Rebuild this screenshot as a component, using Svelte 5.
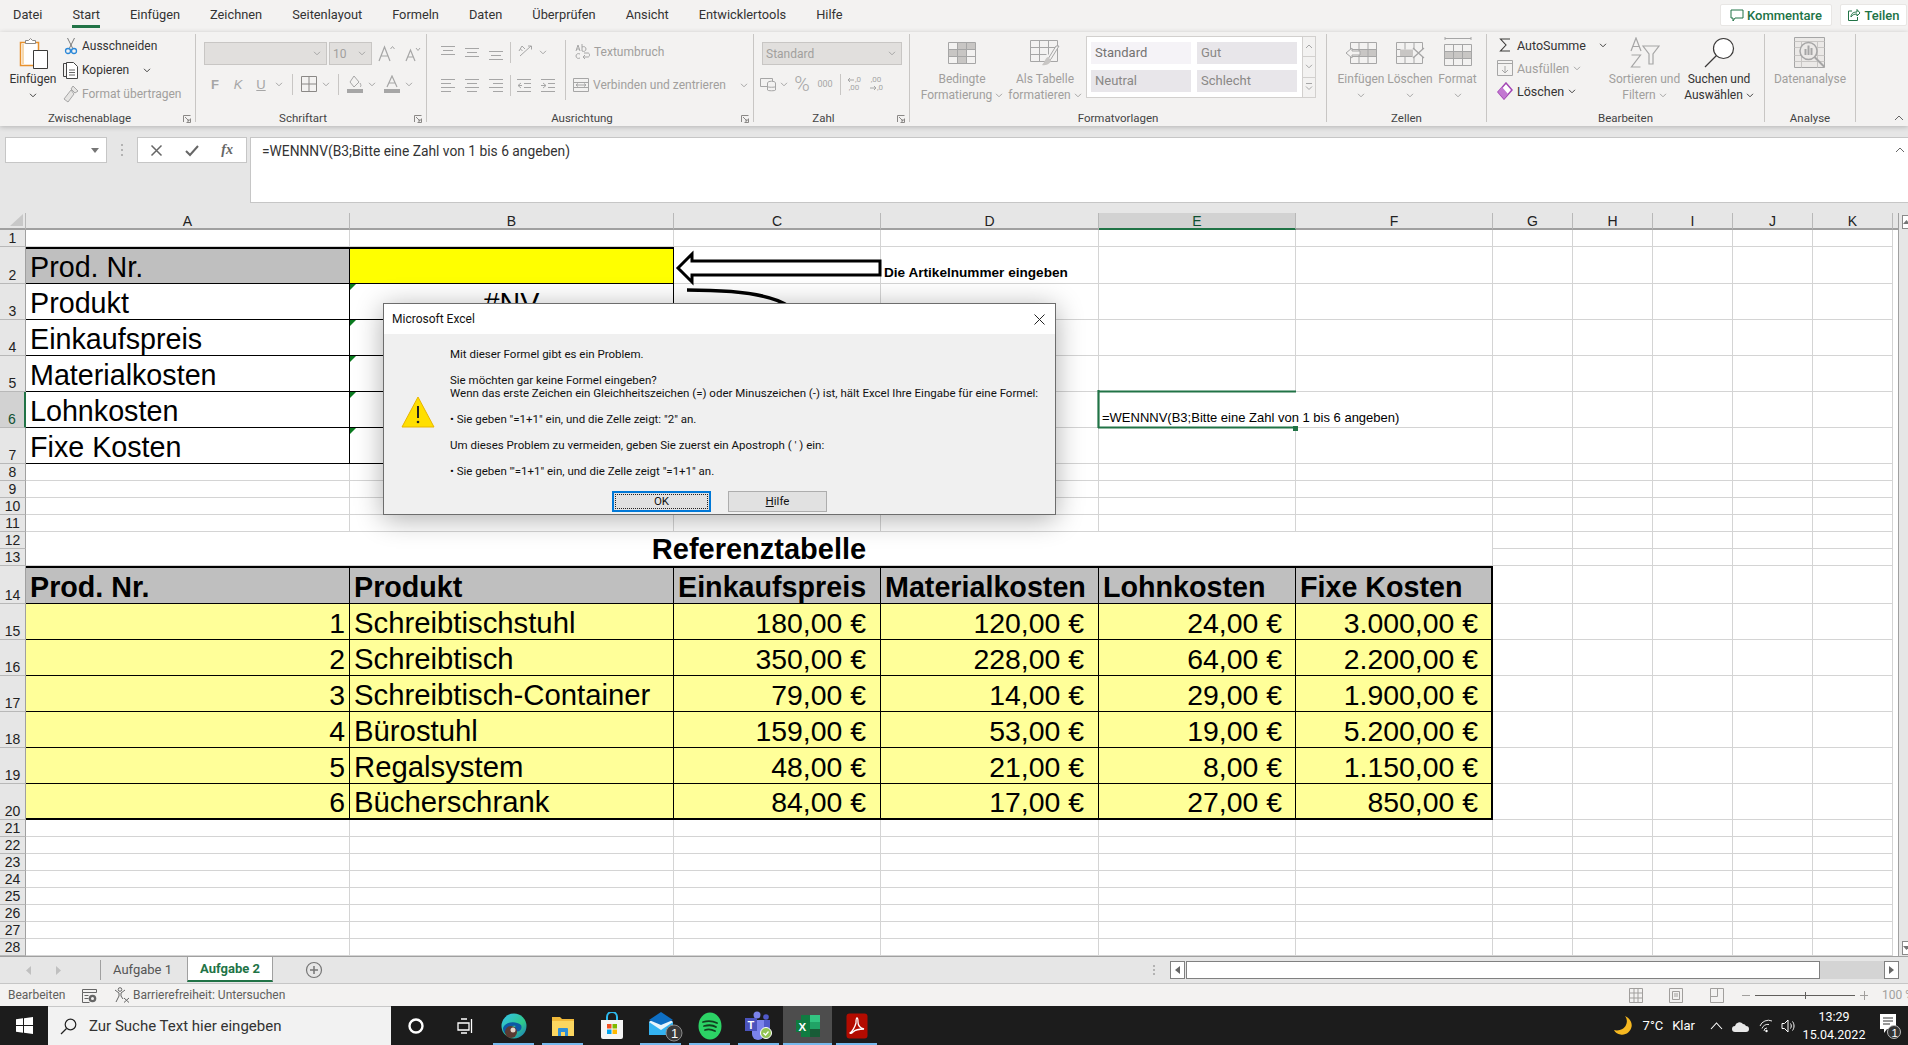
<script lang="ts">
  const cols = ['A', 'B', 'C', 'D', 'E', 'F', 'G', 'H', 'I', 'J', 'K']
  const rowNums = Array.from({ length: 28 }, (_, i) => i + 1)
  const tabs = ['Datei', 'Start', 'Einfügen', 'Zeichnen', 'Seitenlayout', 'Formeln', 'Daten', 'Überprüfen', 'Ansicht', 'Entwicklertools', 'Hilfe']

  const inputLabels: Record<number, string> = {
    2: 'Prod. Nr.',
    3: 'Produkt',
    4: 'Einkaufspreis',
    5: 'Materialkosten',
    6: 'Lohnkosten',
    7: 'Fixe Kosten',
  }

  const refTable = [
    ['Prod. Nr.', 'Produkt', 'Einkaufspreis', 'Materialkosten', 'Lohnkosten', 'Fixe Kosten'],
    ['1', 'Schreibtischstuhl', '180,00 €', '120,00 €', '24,00 €', '3.000,00 €'],
    ['2', 'Schreibtisch', '350,00 €', '228,00 €', '64,00 €', '2.200,00 €'],
    ['3', 'Schreibtisch-Container', '79,00 €', '14,00 €', '29,00 €', '1.900,00 €'],
    ['4', 'Bürostuhl', '159,00 €', '53,00 €', '19,00 €', '5.200,00 €'],
    ['5', 'Regalsystem', '48,00 €', '21,00 €', '8,00 €', '1.150,00 €'],
    ['6', 'Bücherschrank', '84,00 €', '17,00 €', '27,00 €', '850,00 €'],
  ]

  const formula = '=WENNNV(B3;Bitte eine Zahl von 1 bis 6 angeben)'

  function cellText(r: number, c: number): string {
    if (r >= 14 && r <= 20 && c <= 5) return refTable[r - 14][c]
    if (c === 0 && inputLabels[r]) return inputLabels[r]
    if (r === 3 && c === 1) return '#NV'
    if (r === 2 && c === 3) return 'Die Artikelnummer eingeben'
    if (r === 6 && c === 4) return formula
    return ''
  }

  function cellClass(r: number, c: number): string {
    const out: string[] = []
    if (r >= 2 && r <= 7 && c <= 1) {
      out.push('ink', 'lg')
      if (r === 2) out.push('top-thick', c === 0 ? 'grey' : 'yellow')
      if (r > 2 && c === 1) out.push('tri')
      if (r === 3 && c === 1) out.push('center')
    }
    if (r >= 14 && r <= 20 && c <= 5) {
      out.push('ink', 'lg')
      if (r === 14) out.push('top-thick', 'grey', 'bold')
      else out.push('pale')
      if (r === 20) out.push('bottom-thick')
      if (c === 5) out.push('right-thick')
      if (r > 14 && c !== 1) out.push('num', 'num-' + c)
      if (r > 14 && c === 1) out.push('prod')
    }
    if (r === 2 && c === 3) out.push('note')
    if (r === 6 && c === 4) out.push('formula')
    return out.join(' ')
  }
</script>

{#snippet chev(dark = false)}
  <svg class="chev" width="8" height="5" viewBox="0 0 8 5"><path d="M1 .8l3 3 3-3" fill="none" stroke={dark ? '#444' : '#a6a6a6'} stroke-width="1" /></svg>
{/snippet}

{#snippet launcher()}
  <svg class="launcher" width="8" height="8" viewBox="0 0 8 8"><path d="M.5 7V.5H7.500M7.500 3.500V7.500H3.500M2 2l4 4M6 4v2H4" fill="none" stroke="#8a8886" stroke-width="1" /></svg>
{/snippet}

<div class="page">
  <header class="tabbar">
    <nav class="tabs">
      {#each tabs as tab}
        <span class="tab" class:active={tab === 'Start'}>{tab}</span>
      {/each}
    </nav>
    <div class="share">
      <span class="share-btn comments">
        <svg width="14" height="13" viewBox="0 0 14 13"><path d="M1 1h12v8H5l-2 3V9H1z" fill="none" stroke="#217346" /></svg>
        Kommentare
      </span>
      <span class="share-btn teilen">
        <svg width="14" height="14" viewBox="0 0 14 14"><path d="M5 3H1.500v9.500h9V9M4 9c0-4 3-5 6-5V1.500L13 5l-3 3V6C7 6 5 7 4 9z" fill="none" stroke="#217346" /></svg>
        Teilen
      </span>
    </div>
  </header>

  <section class="ribbon">
    <div class="group g-clip">
      <div class="body clip-body">
        <div class="big w60">
          <div class="big-icon">
            <svg width="30" height="32" viewBox="0 0 30 32">
              <path d="M2.500 5.500h18v23h-18z" fill="#fff" stroke="#e8912c" stroke-width="1.500" />
              <path d="M4 27h2V7H4z" fill="#f6d9ae" />
              <path d="M7.500 6.500v-3h3l2-2 2 2h3v3z" fill="#fff" stroke="#8a8886" />
              <path d="M15.500 13.500h14v18h-14z" fill="#fff" stroke="#3b3a39" />
            </svg>
          </div>
          <span class="lbl dark">Einfügen</span>
          {@render chev(true)}
        </div>
        <div class="clip-list">
          <div class="line">
            <svg class="clip-ico" width="16" height="18" viewBox="0 0 16 18"><path d="M4.500 1l5 10M11.500 1l-5 10" fill="none" stroke="#7a7a7a" /><circle cx="5" cy="14" r="2.500" fill="none" stroke="#2b88d8" stroke-width="1.300" /><circle cx="11" cy="14" r="2.500" fill="none" stroke="#2b88d8" stroke-width="1.300" /></svg>
            <span class="dark">Ausschneiden</span>
          </div>
          <div class="line">
            <svg class="clip-ico" width="16" height="18" viewBox="0 0 16 18"><path d="M3.500 15.500h-3V2.500h3" fill="none" stroke="#444" /><path d="M3.500 1.500h7l4 4v12h-11z" fill="#fff" stroke="#444" /><path d="M6 9h6M6 11.500h6M6 14h6" stroke="#666" /></svg>
            <span class="dark">Kopieren</span>
            <span class="pad14">{@render chev(true)}</span>
          </div>
          <div class="line">
            <svg class="clip-ico" width="16" height="18" viewBox="0 0 16 18"><path d="M10 1l5 5-3 2-4-4zM8 5l3 4-6 8-4-3z" fill="#e6e5e3" stroke="#a6a6a6" /></svg>
            <span class="off">Format übertragen</span>
          </div>
        </div>
      </div>
      <div class="group-label shifted">Zwischenablage</div>
      {@render launcher()}
    </div>

    <div class="group g-font">
      <div class="body font-body">
        <div class="row1">
          <div class="combo c-font">{@render chev()}</div>
          <div class="combo c-size"><span>10</span>{@render chev()}</div>
          <svg class="afont" width="18" height="18" viewBox="0 0 18 18"><path d="M1 16L6.500 2 12 16M3 11h7" fill="none" stroke="#a6a6a6" stroke-width="1.200" /><path d="M12.500 4L14.500 1.500 16.500 4" fill="none" stroke="#a6a6a6" /></svg>
          <svg class="afont2" width="16" height="16" viewBox="0 0 16 16"><path d="M1 15L5.500 4 10 15M2.500 11h6" fill="none" stroke="#a6a6a6" stroke-width="1.200" /><path d="M11 2l2 2.500L15 2" fill="none" stroke="#a6a6a6" /></svg>
        </div>
        <div class="row2">
          <span class="t w22 letter b">F</span>
          <span class="t w24 letter i">K</span>
          <span class="t w22 letter u">U</span>
          <span class="t w14">{@render chev()}</span>
          <span class="t w12"><i class="sep"></i></span>
          <span class="t w22"><svg width="16" height="16" viewBox="0 0 16 16"><path d="M.5.500h15v15H.5zM8 .5v15M.5 8h15" fill="none" stroke="#8a8886" /></svg></span>
          <span class="t w12">{@render chev()}</span>
          <span class="t w12"><i class="sep"></i></span>
          <span class="t w22"><svg width="16" height="18" viewBox="0 0 16 18"><path d="M7 1l5 6-5 5-4-5z" fill="none" stroke="#a6a6a6" /><path d="M13 8c1 2 1.500 3 0 4" fill="none" stroke="#a6a6a6" /><path d="M0 14h16v4H0z" fill="#a6a6a6" /></svg></span>
          <span class="t w12">{@render chev()}</span>
          <span class="t w4"></span>
          <span class="t w20"><svg width="16" height="18" viewBox="0 0 16 18"><path d="M3 12L8 1l5 11M5 8h6" fill="none" stroke="#a6a6a6" stroke-width="1.200" /><path d="M0 14h16v4H0z" fill="#a6a6a6" /></svg></span>
          <span class="t w14">{@render chev()}</span>
        </div>
      </div>
      <div class="group-label shifted">Schriftart</div>
      {@render launcher()}
    </div>

    <div class="group g-align">
      <div class="body align-body">
        <div class="align-left">
          <div class="row1b">
            <span class="t w24"><svg width="16" height="16" viewBox="0 0 16 16"><path d="M1 2.500h14M3 6.500h10M1 10.500h14" stroke="#a6a6a6" /></svg></span>
            <span class="t w24"><svg width="16" height="16" viewBox="0 0 16 16"><path d="M1 4.500h14M3 8.500h10M1 12.500h14" stroke="#a6a6a6" /></svg></span>
            <span class="t w24"><svg width="16" height="18" viewBox="0 0 16 18"><path d="M1 8.500h14M3 12.500h10M1 16.500h14" stroke="#a6a6a6" /></svg></span>
            <span class="t w4"><i class="sep"></i></span>
            <span class="t w28"><svg width="18" height="18" viewBox="0 0 18 18"><path d="M3 13L14 3M11 3h3.500v3.500" fill="none" stroke="#a6a6a6" /><path d="M2 8l3-5 3 3M3.500 6l2 2" fill="none" stroke="#a6a6a6" /></svg></span>
            <span class="t w6">{@render chev()}</span>
          </div>
          <div class="row2b">
            <span class="t w24"><svg width="16" height="16" viewBox="0 0 16 16"><path d="M1 2.500h14M1 6.500h10M1 10.500h14M1 14.500h10" stroke="#a6a6a6" /></svg></span>
            <span class="t w24"><svg width="16" height="16" viewBox="0 0 16 16"><path d="M1 2.500h14M3 6.500h10M1 10.500h14M3 14.500h10" stroke="#a6a6a6" /></svg></span>
            <span class="t w24"><svg width="16" height="16" viewBox="0 0 16 16"><path d="M1 2.500h14M5 6.500h10M1 10.500h14M5 14.500h10" stroke="#a6a6a6" /></svg></span>
            <span class="t w4"><i class="sep"></i></span>
            <span class="t w24"><svg width="16" height="16" viewBox="0 0 16 16"><path d="M1 2.500h14M8 6.500h7M8 10.500h7M1 14.500h14M5 6L2 8.500 5 11M2 8.500h4" fill="none" stroke="#a6a6a6" /></svg></span>
            <span class="t w24"><svg width="16" height="16" viewBox="0 0 16 16"><path d="M1 2.500h14M8 6.500h7M8 10.500h7M1 14.500h14M3 6l3 2.500L3 11M6 8.500H1" fill="none" stroke="#a6a6a6" /></svg></span>
          </div>
        </div>
        <i class="sep tall"></i>
        <div class="align-right">
          <div class="line wrapline">
            <svg width="16" height="18" viewBox="0 0 16 18"><path d="M1 8l2-6 2 6M1.800 6h2.400M7 1v7c2 1 4 0 4-2s-2-3-4-2M5 11c-2-1-4 0-4 2s2 3 4 2" fill="none" stroke="#a6a6a6" /><path d="M8 14h5c2 0 2-4 0-4H9M8 14l2-2M8 14l2 2" fill="none" stroke="#a6a6a6" /></svg>
            <span class="off">Textumbruch</span>
          </div>
          <div class="line mergeline">
            <svg width="16" height="16" viewBox="0 0 16 16"><path d="M.5 1.500h15v13H.5zM.5 5.500h15M.5 10.500h15" fill="none" stroke="#a6a6a6" /><path d="M3 8h10M3 8l2-1.500M3 8l2 1.500M13 8l-2-1.500M13 8l-2 1.500" fill="none" stroke="#a6a6a6" /></svg>
            <span class="off">Verbinden und zentrieren</span>
            <span class="pad8">{@render chev()}</span>
          </div>
        </div>
      </div>
      <div class="group-label shifted">Ausrichtung</div>
      {@render launcher()}
    </div>

    <div class="group g-num">
      <div class="body num-body">
        <div class="combo c-num"><span>Standard</span>{@render chev()}</div>
        <div class="num-row">
          <span class="t w20"><svg width="16" height="16" viewBox="0 0 16 16"><path d="M.5 2.500h12v8H.5z" fill="none" stroke="#a6a6a6" /><ellipse cx="11.500" cy="7" rx="4" ry="1.800" fill="#f3f2f1" stroke="#a6a6a6" /><path d="M7.500 7v7c0 1 8 1 8 0V7M7.500 10.500c0 1 8 1 8 0" fill="#f3f2f1" stroke="#a6a6a6" /></svg></span>
          <span class="t w12">{@render chev()}</span>
          <span class="t w24 pct">%</span>
          <span class="t w22 zeros">000</span>
          <span class="t w8"><i class="sep"></i></span>
          <span class="t w20 decs">
            <span class="dec-a"><svg width="8" height="6" viewBox="0 0 8 6"><path d="M1 3h6M1 3l2-2M1 3l2 2" fill="none" stroke="#a6a6a6" /></svg><b>,0</b></span>
            <span class="dec-b">,00</span>
          </span>
          <span class="t w24 decs">
            <span class="dec-a"><b>,00</b></span>
            <span class="dec-a"><svg width="8" height="6" viewBox="0 0 8 6"><path d="M1 3h6M7 3L5 1M7 3L5 5" fill="none" stroke="#a6a6a6" /></svg><b>,0</b></span>
          </span>
        </div>
      </div>
      <div class="group-label shifted">Zahl</div>
      {@render launcher()}
    </div>

    <div class="group g-style">
      <div class="body style-body">
        <div class="big w84">
          <div class="big-icon">
            <svg width="30" height="24" viewBox="0 0 30 24">
              <path d="M10 1h18v7H10zM1 8h18v7H1zM10 15h9v7h-9z" fill="#c8c6c4" />
              <path d="M1.500 1.500h27v21h-27zM1.500 8.500h27M1.500 15.500h27M10.500 1.500v21M19.500 1.500v21" fill="none" stroke="#a6a6a6" />
            </svg>
          </div>
          <span class="lbl off">Bedingte</span>
          <span class="lbl off">Formatierung {@render chev()}</span>
        </div>
        <div class="big w78">
          <div class="big-icon">
            <svg width="32" height="28" viewBox="0 0 32 28">
              <path d="M1.500 1.500h27v21h-27zM1.500 8.500h27M1.500 15.500h16M10.500 1.500v21M19.500 1.500v14" fill="none" stroke="#a6a6a6" />
              <path d="M30 7L22 20c-1 2-3 1-3 0l8-13z" fill="#f3f2f1" stroke="#a6a6a6" />
              <path d="M19 18c-3 1-3 5-6 8 5 1 9-2 9-5z" fill="#c8c6c4" />
            </svg>
          </div>
          <span class="lbl off">Als Tabelle</span>
          <span class="lbl off">formatieren {@render chev()}</span>
        </div>
        <div class="gallery">
          <span class="g-cell lite">Standard</span>
          <span class="g-cell">Gut</span>
          <span class="g-cell">Neutral</span>
          <span class="g-cell">Schlecht</span>
        </div>
        <div class="gallery-scroll">
          <span><svg width="8" height="5" viewBox="0 0 8 5"><path d="M1 4l3-3 3 3" fill="none" stroke="#a6a6a6" /></svg></span>
          <span>{@render chev()}</span>
          <span><svg width="8" height="8" viewBox="0 0 8 8"><path d="M1 .5h6M1 3.500l3 3 3-3" fill="none" stroke="#a6a6a6" /></svg></span>
        </div>
      </div>
      <div class="group-label">Formatvorlagen</div>
    </div>

    <div class="group g-cells">
      <div class="body cells-body">
        <div class="big w48">
          <div class="big-icon">
            <svg width="32" height="24" viewBox="0 0 32 24">
              <path d="M14 8.500h17v7H14z" fill="#c8c6c4" />
              <path d="M5.500 1.500h26v21h-26zM5.500 8.500h26M5.500 15.500h26M14 1.500v21M23 1.500v21" fill="none" stroke="#a6a6a6" />
              <path d="M1 12l6-5v3h8v4H7v3z" fill="#f3f2f1" stroke="#a6a6a6" />
            </svg>
          </div>
          <span class="lbl off">Einfügen</span>
          {@render chev()}
        </div>
        <div class="big w50">
          <div class="big-icon">
            <svg width="30" height="24" viewBox="0 0 30 24">
              <path d="M5 8.500h13v7H5z" fill="#c8c6c4" />
              <path d="M1.500 1.500h26v7M1.500 22.500h26v-7M1.500 1.500v7h4M1.500 22.500v-7h4M1.500 8.500v7h16M10 1.500v7M19 1.500v7M10 15.500v7M19 15.500v7" fill="none" stroke="#a6a6a6" />
              <path d="M18 7l11 10M29 7L18 17" stroke="#a6a6a6" stroke-width="1.300" />
            </svg>
          </div>
          <span class="lbl off">Löschen</span>
          {@render chev()}
        </div>
        <div class="big w45">
          <div class="big-icon">
            <svg width="28" height="32" viewBox="0 0 28 32">
              <path d="M1 1.500h26M1 0v3M27 0v3" stroke="#a6a6a6" />
              <path d="M1 14h26v7H1z" fill="#c8c6c4" />
              <path d="M.5 7.500h27v21H.5zM.5 14.500h27M.5 21.500h27M9.500 7.500v21M18.500 7.500v21" fill="none" stroke="#a6a6a6" />
            </svg>
          </div>
          <span class="lbl off">Format</span>
          {@render chev()}
        </div>
      </div>
      <div class="group-label">Zellen</div>
    </div>

    <div class="group g-edit">
      <div class="body edit-body">
        <div class="edit-list">
          <div class="eline">
            <svg width="16" height="18" viewBox="0 0 16 18"><path d="M13 3H3.500L9 9l-5.500 6H13" fill="none" stroke="#3b3a39" stroke-width="1.100" /></svg>
            <span class="dark">AutoSumme</span>
            <span class="pad10">{@render chev(true)}</span>
          </div>
          <div class="eline">
            <svg width="16" height="16" viewBox="0 0 16 16"><path d="M.5.500h15v15H.5z" fill="none" stroke="#a6a6a6" /><path d="M.5 3.500h15M8 6v7M5 10l3 3 3-3" fill="none" stroke="#a6a6a6" /></svg>
            <span class="off">Ausfüllen</span>
            {@render chev()}
          </div>
          <div class="eline">
            <svg width="16" height="18" viewBox="0 0 16 18"><path d="M9 1l6 7-8 9-6-7z" fill="#fff" stroke="#a347b4" stroke-width="1.500" /><path d="M1 10l4-5 6 7-4 5z" fill="#c278d1" /></svg>
            <span class="dark">Löschen</span>
            {@render chev(true)}
          </div>
        </div>
        <div class="big w71">
          <div class="big-icon">
            <svg width="30" height="32" viewBox="0 0 30 32">
              <path d="M1 14L6 1l5 13M3 9.500h6M1.500 18h9L1.500 30h9" fill="none" stroke="#a6a6a6" stroke-width="1.200" />
              <path d="M13 9h16l-6 8v10h-4V17z" fill="none" stroke="#a6a6a6" stroke-width="1.200" />
            </svg>
          </div>
          <span class="lbl off">Sortieren und</span>
          <span class="lbl off">Filtern {@render chev()}</span>
        </div>
        <div class="big w76">
          <div class="big-icon">
            <svg width="32" height="32" viewBox="0 0 32 32">
              <circle cx="20.500" cy="11.500" r="10" fill="#fff" stroke="#3b3a39" stroke-width="1.200" />
              <path d="M13.500 18.500L2 30" stroke="#3b3a39" stroke-width="1.200" />
            </svg>
          </div>
          <span class="lbl dark">Suchen und</span>
          <span class="lbl dark">Auswählen {@render chev(true)}</span>
        </div>
      </div>
      <div class="group-label">Bearbeiten</div>
    </div>

    <div class="group g-analyse">
      <div class="body analyse-body">
        <div class="big full">
          <div class="big-icon">
            <svg width="34" height="34" viewBox="0 0 34 34">
              <path d="M1.500 1.500h30v30h-30z" fill="#ebe9e7" stroke="#a6a6a6" />
              <path d="M1.500 5.500h30M1.500 11.500h30M1.500 19.500h30M1.500 25.500h30M8.500 5.500v26M24.500 5.500v26" fill="none" stroke="#c8c6c4" />
              <circle cx="15.500" cy="15" r="8.500" fill="#ebe9e7" stroke="#a6a6a6" stroke-width="1.500" />
              <path d="M21.500 21l10 10" stroke="#a6a6a6" stroke-width="2" />
              <path d="M11.500 13h2v6h-2zM14.500 9.500h2V19h-2zM17.500 12h2v7h-2z" fill="#a6a6a6" />
            </svg>
          </div>
          <span class="lbl off">Datenanalyse</span>
        </div>
      </div>
      <div class="group-label">Analyse</div>
    </div>

    <svg class="collapse" width="10" height="6" viewBox="0 0 10 6"><path d="M1 5l4-4 4 4" fill="none" stroke="#666" /></svg>
  </section>

  <section class="formula-bar">
    <div class="name-box"><svg width="8" height="5" viewBox="0 0 8 5"><path d="M0 0h8L4 5z" fill="#767676" /></svg></div>
    <div class="dots"><i></i><i></i><i></i></div>
    <div class="fx-box">
      <svg width="13" height="13" viewBox="0 0 13 13"><path d="M1.500 1.500l10 10M11.500 1.500l-10 10" stroke="#666" stroke-width="1.500" /></svg>
      <svg width="14" height="13" viewBox="0 0 14 13"><path d="M1 7l4 4 8-9" fill="none" stroke="#666" stroke-width="2" /></svg>
      <span class="fx">fx</span>
    </div>
    <div class="formula-input">
      {formula}
      <svg class="collapse2" width="10" height="6" viewBox="0 0 10 6"><path d="M1 5l4-4 4 4" fill="none" stroke="#666" /></svg>
    </div>
  </section>

  <section class="sheet">
    <div class="grid">
      <div class="col-head corner"><svg width="14" height="14" viewBox="0 0 14 14"><path d="M14 1v12H1z" fill="#c8c8c8" /></svg></div>
      {#each cols as c}
        <div class="col-head" class:sel={c === 'E'}>{c}</div>
      {/each}
      <div class="col-head end"></div>

      {#each rowNums as r}
        <div class="row-head" class:sel={r === 6}>{r}</div>
        {#if r === 12}
          <div class="cell merged">Referenztabelle</div>
        {/if}
        {#each cols as c, ci}
          {#if !((r === 12 || r === 13) && ci <= 5)}
            <div class="cell {cellClass(r, ci)}">{cellText(r, ci)}</div>
          {/if}
        {/each}
        <div class="filler"></div>
      {/each}
    </div>
    <div class="vscroll">
      <span class="v-btn"><svg width="7" height="4" viewBox="0 0 7 4"><path d="M0 4l3.500-4L7 4z" fill="#767676" /></svg></span>
      <span class="v-btn"><svg width="7" height="4" viewBox="0 0 7 4"><path d="M0 0l3.500 4L7 0z" fill="#767676" /></svg></span>
    </div>
  </section>

  <section class="sheet-tabs">
    <div class="nav-arrows">
      <svg width="6" height="9" viewBox="0 0 6 9"><path d="M5 0v9L0 4.500z" fill="#c0c0c0" /></svg>
      <svg width="6" height="9" viewBox="0 0 6 9"><path d="M1 0v9l5-4.500z" fill="#c0c0c0" /></svg>
    </div>
    <i class="tab-sep"></i>
    <span class="sheet-tab">Aufgabe 1</span>
    <span class="sheet-tab current">Aufgabe 2</span>
    <svg class="add" width="18" height="18" viewBox="0 0 18 18"><circle cx="9" cy="9" r="7.500" fill="none" stroke="#767676" stroke-width="1.200" /><path d="M9 5v8M5 9h8" stroke="#767676" stroke-width="1.500" /></svg>
    <div class="split-dots"><i></i><i></i><i></i></div>
    <div class="hscroll">
      <span class="h-btn"><svg width="5" height="8" viewBox="0 0 5 8"><path d="M5 0v8L0 4z" fill="#666" /></svg></span>
      <span class="h-thumb"></span>
      <span class="h-track"></span>
      <span class="h-btn"><svg width="5" height="8" viewBox="0 0 5 8"><path d="M0 0v8l5-4z" fill="#666" /></svg></span>
    </div>
  </section>

  <footer class="status">
    <span class="st-text first">Bearbeiten</span>
    <svg class="st-macro" width="15" height="15" viewBox="0 0 15 15"><path d="M.5 1.500h14v3h-14zM.5 4.500v10h7M2.500 7.500h4M2.500 10.500h4" fill="none" stroke="#666" /><circle cx="10.500" cy="10.500" r="3.800" fill="#666" /><circle cx="10.500" cy="10.500" r="1.500" fill="#f3f2f1" /></svg>
    <svg class="st-access" width="16" height="16" viewBox="0 0 16 16"><circle cx="6" cy="2.500" r="1.800" fill="none" stroke="#666" /><path d="M1 3l4 3v3l-3 6M11 3L7 6v3l2 3" fill="none" stroke="#666" /><path d="M10 11l5 4.500M15 11l-5 4.500" stroke="#666" /></svg>
    <span class="st-text">Barrierefreiheit: Untersuchen</span>
    <div class="views">
      <svg width="14" height="15" viewBox="0 0 14 15"><path d="M.5.500h13v14H.5zM.5 5h13M.5 10h13M5 .5v14M9 .5v14" fill="none" stroke="#a19f9d" /></svg>
      <svg width="14" height="15" viewBox="0 0 14 15"><path d="M.5.500h13v14H.5z" fill="none" stroke="#a19f9d" /><path d="M3.500 3.500h7v8h-7zM5 6h4M5 8h4" fill="none" stroke="#a19f9d" /></svg>
      <svg width="14" height="15" viewBox="0 0 14 15"><path d="M.5.500h13v14H.5zM.5 8.500h7V.5" fill="none" stroke="#a19f9d" /></svg>
    </div>
    <div class="zoom">
      <span class="z-sign minus"></span>
      <span class="z-track"><i></i></span>
      <span class="z-sign plus"></span>
      <span class="z-pct">100 %</span>
    </div>
  </footer>

  <footer class="taskbar">
    <svg class="win" width="17" height="17" viewBox="0 0 17 17"><path d="M0 2.300L7 1.300V8H0zM8 1.200L17 0v8H8zM0 9h7v6.700l-7-1zM8 9h9v8l-9-1.200z" fill="#fff" /></svg>
    <div class="search">
      <svg width="17" height="17" viewBox="0 0 17 17"><circle cx="10.500" cy="6.500" r="5.300" fill="none" stroke="#222" stroke-width="1.200" /><path d="M6.500 10.500L1 16" stroke="#222" stroke-width="1.300" /></svg>
      <span>Zur Suche Text hier eingeben</span>
    </div>
    <div class="apps">
      <span class="app"><svg width="16" height="16" viewBox="0 0 16 16"><circle cx="8" cy="8" r="6.500" fill="none" stroke="#fff" stroke-width="2.400" /></svg></span>
      <span class="app"><svg width="16" height="16" viewBox="0 0 16 16"><path d="M1 5h11v7H1zM4 1h6M4 15h6M14.500 1v14" fill="none" stroke="#fff" stroke-width="1.300" /></svg></span>
      <span class="app on">
        <svg width="26" height="28" viewBox="0 0 26 28">
          <defs>
            <linearGradient id="edgeA" x1="0" y1="0" x2="1" y2="1"><stop offset="0" stop-color="#35c1f1" /><stop offset=".6" stop-color="#2ec98a" /><stop offset="1" stop-color="#1b6fc4" /></linearGradient>
          </defs>
          <circle cx="13" cy="14" r="12.500" fill="url(#edgeA)" />
          <path d="M2 16c2-6 12-8 18-3 2 4-2 8-6 6-2-2-1-4 1-5-6-1-10 2-9 9-3-2-4-4-4-7z" fill="#0c59a4" />
          <circle cx="10" cy="20" r="6" fill="#5a3a32" />
          <circle cx="12" cy="18" r="2.500" fill="#e3d6cc" />
        </svg>
      </span>
      <span class="app on">
        <svg width="24" height="24" viewBox="0 0 24 24">
          <path d="M1 3h8l2 2h12v17H1z" fill="#f0b93a" />
          <path d="M1 7h22v15H1z" fill="#fbd660" />
          <path d="M7 22v-7a1 1 0 0 1 1-1h8a1 1 0 0 1 1 1v7h-3v-4h-4v4z" fill="#2e8fd8" />
        </svg>
      </span>
      <span class="app">
        <svg width="24" height="28" viewBox="0 0 24 28">
          <path d="M7 8V5a5 5 0 0 1 10 0v3" fill="none" stroke="#2dbbf0" stroke-width="2" />
          <path d="M1 8h22v17a2 2 0 0 1-2 2H3a2 2 0 0 1-2-2z" fill="#f5f5f5" />
          <path d="M7 12h4.500v4.500H7z" fill="#f25022" /><path d="M12.500 12H17v4.500h-4.500z" fill="#7fba00" /><path d="M7 17.500h4.500V22H7z" fill="#00a4ef" /><path d="M12.500 17.500H17V22h-4.500z" fill="#ffb900" />
        </svg>
      </span>
      <span class="app on mail">
        <svg width="34" height="32" viewBox="0 0 34 32">
          <path d="M0 12L12 3l12 9v13H0z" fill="#0e6fc4" />
          <path d="M0 12h24v13H0z" fill="#34b3f1" />
          <path d="M0 12l12 8 12-8L12 3z" fill="#e9f5fc" />
          <path d="M0 10L12 2l12 8-12 5z" fill="#0e6fc4" />
          <circle cx="25" cy="23" r="8" fill="#3a3a3a" stroke="#8a8a8a" />
          <text x="22" y="28" font-size="13" fill="#fff" font-family="Liberation Sans">1</text>
        </svg>
      </span>
      <span class="app on">
        <svg width="24" height="28" viewBox="0 0 24 28"><ellipse cx="12" cy="14" rx="11.500" ry="13.500" fill="#2cd365" /><path d="M5 10c5-1.500 10-1 14 1M6 14c4-1 9-1 12 1M7 18c3-1 7-.5 10 1" fill="none" stroke="#12401f" stroke-width="1.800" stroke-linecap="round" /></svg>
      </span>
      <span class="app on">
        <svg width="30" height="30" viewBox="0 0 30 30">
          <circle cx="13" cy="4" r="3.500" fill="#7b83eb" /><circle cx="22" cy="6" r="2.800" fill="#5059c9" />
          <path d="M15 9h11v10a4 4 0 0 1-4 4h-3z" fill="#5059c9" />
          <path d="M8 9h12v14a5 5 0 0 1-12 0z" fill="#7b83eb" />
          <path d="M1 7h12v13H1z" fill="#4b53bc" />
          <text x="3.500" y="17.500" font-size="11" font-weight="bold" fill="#fff" font-family="Liberation Sans">T</text>
          <circle cx="22" cy="22" r="5.500" fill="#92c353" stroke="#fff" />
          <path d="M19.500 22l2 2 3-3.500" fill="none" stroke="#fff" stroke-width="1.200" />
        </svg>
      </span>
      <span class="app on current">
        <svg width="26" height="26" viewBox="0 0 26 26">
          <path d="M6 2h19v22H6z" fill="#107c41" /><path d="M15 2h10v7H15z" fill="#33c481" /><path d="M15 9h10v7H15z" fill="#21a366" /><path d="M15 16h10v8H15z" fill="#185c37" />
          <path d="M1 7h12v12H1z" fill="#0f7b3f" />
          <text x="3.500" y="17.500" font-size="11.500" font-weight="bold" fill="#fff" font-family="Liberation Sans">X</text>
        </svg>
      </span>
      <span class="app on">
        <svg width="22" height="26" viewBox="0 0 22 26"><rect x=".5" y=".5" width="21" height="25" rx="3" fill="#b30b00" /><path d="M4 20c2-1 5-6 6-10 0-3 0-5 1-5s1 2 1 4c0 3 2 6 6 7-5 0-9 1-11 3-1 1-2 2-3 1z" fill="none" stroke="#fff" stroke-width="1.300" /></svg>
      </span>
    </div>
    <div class="tray">
      <svg class="moon" width="18" height="19" viewBox="0 0 18 19"><path d="M11 0c5 2 7.500 7 6.500 11-1 5-6 8.500-11 7.500-3-.5-5.500-2-6.500-4.500 5 1.500 10-1 12-5 1.500-3 1-6.500-1-9z" fill="#f6b820" /></svg>
      <span class="temp">7°C</span>
      <span class="klar">Klar</span>
      <svg class="i-up" width="13" height="8" viewBox="0 0 13 8"><path d="M1 7l5.500-6L12 7" fill="none" stroke="#fff" stroke-width="1.100" /></svg>
      <svg class="i-cloud" width="17" height="12" viewBox="0 0 17 12"><path d="M3 12a3 3 0 0 1 0-6 4.500 4.500 0 0 1 8-2 3.500 3.500 0 0 1 3 2 3 3 0 0 1 0 6z" fill="#e8e8e8" /></svg>
      <svg class="i-wifi" width="14" height="14" viewBox="0 0 14 14"><path d="M1 7a9 9 0 0 1 12-5M3 9.500a6 6 0 0 1 7-4M5 12a3 3 0 0 1 3-3" fill="none" stroke="#e8e8e8" /><circle cx="7.500" cy="12" r="1.200" fill="#fff" /></svg>
      <svg class="i-vol" width="16" height="16" viewBox="0 0 16 16"><path d="M1 5.500h2.500L7 2v12l-3.500-3.500H1zM9.500 5.500c1 1.500 1 3.500 0 5M11.500 3.500c2 2.500 2 6.500 0 9" fill="none" stroke="#fff" /></svg>
      <div class="clock"><span>13:29</span><span>15.04.2022</span></div>
      <svg class="notif" width="24" height="26" viewBox="0 0 24 26">
        <path d="M1 1h16v15H8l-3 4v-4H1z" fill="#fff" />
        <path d="M4 5h10M4 8h10M4 11h7" stroke="#333" />
        <circle cx="15" cy="19" r="6.500" fill="#333" stroke="#bbb" />
        <text x="12.500" y="23.500" font-size="11.500" fill="#fff" font-family="Liberation Sans">1</text>
      </svg>
    </div>
  </footer>

  <svg class="shapes" width="1908" height="1045" viewBox="0 0 1908 1045">
    <path d="M678 268L692 254V261H880V275H692V282Z" fill="#fff" stroke="#000" stroke-width="3" />
    <path d="M687 290C730 290 770 293 788 306" fill="none" stroke="#000" stroke-width="3.500" />
    <path d="M1098.500 391.500H1296M1098.500 390V428M1098 427.500H1294" fill="none" stroke="#217346" stroke-width="2.200" />
    <rect x="1293" y="426" width="5" height="5" fill="#217346" />
  </svg>

  <div class="dialog">
    <div class="dlg-title">
      <span>Microsoft Excel</span>
      <svg width="11" height="11" viewBox="0 0 11 11"><path d="M.5.500l10 10M10.500.5l-10 10" stroke="#222" /></svg>
    </div>
    <div class="dlg-body">
      <svg class="warn" width="34" height="32" viewBox="0 0 34 32">
        <path d="M17 1L33 31H1z" fill="#ffdf00" stroke="#e8b500" />
        <path d="M17 10v12" stroke="#222" stroke-width="2" />
        <circle cx="17" cy="26" r="1.300" fill="#222" />
      </svg>
      <div class="dlg-text">
        <p>Mit dieser Formel gibt es ein Problem.</p>
        <p>Sie möchten gar keine Formel eingeben?<br />Wenn das erste Zeichen ein Gleichheitszeichen (=) oder Minuszeichen (-) ist, hält Excel Ihre Eingabe für eine Formel:</p>
        <p>• Sie geben "=1+1" ein, und die Zelle zeigt: "2" an.</p>
        <p>Um dieses Problem zu vermeiden, geben Sie zuerst ein Apostroph ( ' ) ein:</p>
        <p>• Sie geben "'=1+1" ein, und die Zelle zeigt "=1+1" an.</p>
      </div>
    </div>
    <div class="dlg-actions">
      <button class="dlg-btn primary"><span>OK</span></button>
      <button class="dlg-btn"><u>H</u>ilfe</button>
    </div>
  </div>
</div>

<style>
  :global(body) {
    margin: 0;
    background: #e6e6e6;
  }
  .page {
    position: relative;
    width: 1908px;
    height: 1045px;
    overflow: hidden;
    display: flex;
    flex-direction: column;
    font-family: Roboto, 'Noto Sans', sans-serif;
    font-size: 12px;
    color: #333;
  }
  svg {
    display: block;
    flex: none;
  }
  .off { color: #a19f9d; }
  .dark { color: #333; }

  .tabbar {
    height: 32px;
    flex: none;
    background: #f3f2f1;
    display: flex;
    justify-content: space-between;
  }
  .tabs {
    display: flex;
    gap: 30px;
    padding-left: 13px;
  }
  .tab {
    height: 30px;
    line-height: 30px;
    font-size: 12.8px;
    color: #333;
    position: relative;
  }
  .tab.active::after {
    content: '';
    position: absolute;
    left: 0;
    right: 0;
    top: 25px;
    height: 3px;
    background: #217346;
  }
  .share {
    display: flex;
    gap: 8px;
    padding: 4px 1px 0 0;
  }
  .share-btn {
    height: 22px;
    display: flex;
    align-items: center;
    justify-content: center;
    gap: 3px;
    background: #fff;
    border: 1px solid #e8e6e4;
    border-radius: 2px;
    color: #217346;
    font-size: 13px;
    font-weight: 500;
    box-sizing: border-box;
  }
  .comments { width: 112px; }
  .teilen { width: 67px; }

  .ribbon {
    position: relative;
    z-index: 1;
    height: 94px;
    flex: none;
    background: #f3f2f1;
    display: flex;
    box-sizing: border-box;
    padding-top: 2px;
    box-shadow: 0 1px 5px rgba(0, 0, 0, 0.22);
  }
  .group {
    position: relative;
    height: 88px;
    box-sizing: border-box;
    border-right: 1px solid #c8c6c4;
    flex: none;
  }
  .g-clip { width: 196px; }
  .g-font { width: 231px; }
  .g-align { width: 327px; }
  .g-num { width: 156px; }
  .g-style { width: 417px; }
  .g-cells { width: 160px; }
  .g-edit { width: 278px; }
  .g-analyse { width: 91px; }
  .body {
    height: 76px;
    box-sizing: border-box;
    display: flex;
  }
  .group-label {
    height: 16px;
    line-height: 16px;
    text-align: center;
    font-size: 11.5px;
    color: #444;
  }
  .group-label.shifted { padding-right: 16px; }
  .launcher {
    position: absolute;
    right: 4px;
    bottom: -1px;
  }
  .collapse {
    position: absolute;
    right: 4px;
    bottom: 5px;
  }

  .big {
    display: flex;
    flex-direction: column;
    align-items: center;
    flex: none;
  }
  .big-icon {
    height: 37px;
    display: flex;
    align-items: center;
    justify-content: center;
  }
  .lbl {
    height: 16px;
    line-height: 16px;
    white-space: nowrap;
    display: flex;
    align-items: center;
    gap: 3px;
    font-size: 12px;
  }
  .big > :global(.chev) { margin-top: 6px; }
  .w60 { width: 60px; margin-left: 3px; }
  .w84 { width: 84px; }
  .w78 { width: 78px; margin-left: 2px; }
  .w48 { width: 48px; }
  .w50 { width: 50px; }
  .w45 { width: 45px; }
  .w71 { width: 71px; }
  .w76 { width: 76px; margin-left: 1px; }
  .full { width: 100%; }

  .t {
    flex: none;
    display: flex;
    align-items: center;
    justify-content: center;
    height: 24px;
  }
  .w4 { width: 4px; }
  .w6 { width: 6px; }
  .w8 { width: 8px; }
  .w12 { width: 12px; }
  .w14 { width: 14px; }
  .w20 { width: 20px; }
  .w22 { width: 22px; }
  .w24 { width: 24px; }
  .w28 { width: 28px; }
  .sep {
    display: block;
    width: 1px;
    height: 21px;
    background: #c8c6c4;
    flex: none;
  }
  .sep.tall {
    height: 60px;
    margin-top: 6px;
  }

  .line {
    height: 24px;
    display: flex;
    align-items: center;
    white-space: nowrap;
  }
  .clip-ico { margin-right: 3px; }
  .pad14 { margin-left: 14px; }
  .pad8 { margin-left: 10px; }

  .font-body, .num-body {
    flex-direction: column;
    padding-top: 8px;
    padding-left: 8px;
  }
  .row1 {
    display: flex;
    height: 23px;
    align-items: center;
  }
  .combo {
    height: 23px;
    box-sizing: border-box;
    background: #e1dfdd;
    border: 1px solid #c8c6c4;
    display: flex;
    align-items: center;
    justify-content: flex-end;
    padding: 0 5px 0 3px;
    color: #a19f9d;
    flex: none;
  }
  .combo span { margin-right: auto; }
  .c-font { width: 123px; }
  .c-size { width: 43px; margin-left: 2px; }
  .c-num { width: 140px; font-size: 12px; }
  .afont { margin-left: 6px; }
  .afont2 { margin-left: 9px; }
  .row2 {
    display: flex;
    margin-top: 7px;
  }
  .letter {
    font-size: 13px;
    color: #a6a6a6;
    font-family: 'Liberation Sans', sans-serif;
  }
  .letter.b { font-weight: bold; }
  .letter.i { font-style: italic; }
  .letter.u { text-decoration: underline; }

  .align-body { padding-left: 9px; }
  .align-left { width: 129px; padding-top: 6px; flex: none; }
  .row1b, .row2b { display: flex; }
  .row2b { margin-top: 9px; }
  .align-right {
    padding-top: 6px;
    padding-left: 7px;
  }
  .wrapline { gap: 3px; padding-left: 2px; }
  .mergeline { margin-top: 9px; gap: 4px; }

  .num-row {
    display: flex;
    margin-top: 7px;
    margin-left: -4px;
    align-items: center;
  }
  .pct { font-size: 21px; font-weight: 300; color: #a6a6a6; }
  .zeros { font-size: 9px; color: #a6a6a6; }
  .decs {
    flex-direction: column;
    font-size: 8px;
    line-height: 8px;
    color: #a6a6a6;
  }
  .dec-a { display: flex; align-items: center; }
  .dec-a b, .dec-b { font-weight: 400; }

  .style-body { padding-left: 10px; }
  .gallery {
    margin-left: 2px;
    margin-top: 2px;
    width: 216px;
    height: 62px;
    box-sizing: border-box;
    background: #fff;
    border: 1px solid #d2d0ce;
    border-right: 0;
    display: grid;
    grid-template-columns: 100px 100px;
    grid-template-rows: 22px 22px;
    gap: 6px;
    padding: 5px 4px;
  }
  .g-cell {
    background: #e8e6ea;
    color: #8a8886;
    font-size: 13px;
    line-height: 22px;
    padding-left: 4px;
  }
  .g-cell.lite { background: #f5f3f7; color: #747271; }
  .gallery-scroll {
    margin-top: 2px;
    width: 14px;
    height: 62px;
    display: flex;
    flex-direction: column;
    border: 1px solid #d2d0ce;
    box-sizing: border-box;
  }
  .gallery-scroll span {
    flex: 1;
    display: flex;
    align-items: center;
    justify-content: center;
    border-bottom: 1px solid #d2d0ce;
  }
  .gallery-scroll span:last-child { border-bottom: 0; }

  .cells-body { padding-left: 10px; }
  .edit-body { padding-left: 10px; }
  .edit-list { width: 112px; flex: none; }
  .eline {
    height: 22px;
    display: flex;
    align-items: center;
    gap: 4px;
    white-space: nowrap;
    font-size: 12.5px;
  }
  .eline + .eline { margin-top: 1px; }
  .pad10 { margin-left: 9px; }

  .formula-bar {
    height: 87px;
    flex: none;
    box-sizing: border-box;
    background: #e6e6e6;
    display: flex;
    align-items: flex-start;
    padding: 11px 0 0 5px;
  }
  .name-box {
    width: 102px;
    height: 26px;
    box-sizing: border-box;
    background: #fff;
    border: 1px solid #c6c6c6;
    display: flex;
    align-items: center;
    justify-content: flex-end;
    padding-right: 7px;
  }
  .dots {
    width: 30px;
    height: 26px;
    display: flex;
    flex-direction: column;
    align-items: center;
    justify-content: center;
    gap: 3px;
  }
  .dots i, .split-dots i {
    display: block;
    width: 2px;
    height: 2px;
    background: #b3b3b3;
  }
  .fx-box {
    width: 110px;
    height: 26px;
    box-sizing: border-box;
    background: #fff;
    border: 1px solid #c6c6c6;
    display: flex;
    align-items: center;
    justify-content: space-between;
    padding: 0 13px 0 12px;
  }
  .fx {
    font-family: 'Liberation Serif', serif;
    font-style: italic;
    font-weight: bold;
    font-size: 14px;
    color: #666;
  }
  .formula-input {
    position: relative;
    margin-left: 3px;
    flex: 1;
    height: 66px;
    box-sizing: border-box;
    background: #fff;
    border: 1px solid #c6c6c6;
    border-right: 0;
    padding: 4px 0 0 11px;
    font-size: 13.8px;
    line-height: 18px;
    color: #333;
  }
  .collapse2 {
    position: absolute;
    right: 3px;
    top: 9px;
  }

  .sheet {
    height: 743px;
    flex: none;
    display: flex;
    background: #e6e6e6;
  }
  .grid {
    width: 1899px;
    flex: none;
    box-sizing: border-box;
    border-right: 1px solid #a0a0a0;
    background: #fff;
    display: grid;
    grid-template-columns: 26px 324px 324px 207px 218px 197px 197px repeat(5, 80px) 1fr;
    grid-template-rows: 17px 17px 37px repeat(5, 36px) repeat(6, 17px) 38px repeat(6, 36px) repeat(8, 17px);
    font-family: 'Liberation Sans', Arial, sans-serif;
  }
  .col-head {
    background: #e6e6e6;
    border-bottom: 2px solid #a0a0a0;
    border-right: 1px solid #b8b8b8;
    box-sizing: border-box;
    text-align: center;
    font-size: 14px;
    line-height: 16px;
    color: #222;
  }
  .col-head.corner {
    display: flex;
    align-items: flex-end;
    justify-content: flex-end;
    padding: 0 2px 1px 0;
  }
  .col-head.end { border-right: 0; }
  .col-head.sel {
    background: #d2d2d2;
    border-bottom-color: #217346;
    color: #0f5132;
  }
  .row-head {
    background: #e6e6e6;
    border-bottom: 1px solid #b8b8b8;
    border-right: 1px solid #a0a0a0;
    box-sizing: border-box;
    display: flex;
    align-items: flex-end;
    justify-content: center;
    font-size: 14px;
    line-height: 16px;
    color: #222;
  }
  .row-head.sel {
    background: #d2d2d2;
    border-right: 2px solid #217346;
    color: #0f5132;
  }
  .cell {
    box-sizing: border-box;
    border-right: 1px solid #d4d4d4;
    border-bottom: 1px solid #d4d4d4;
    display: flex;
    align-items: flex-end;
    white-space: nowrap;
    position: relative;
    min-width: 0;
    color: #000;
  }
  .filler { background: #fff; }
  .merged {
    grid-column: span 6;
    grid-row: span 2;
    justify-content: center;
    font-size: 29px;
    font-weight: bold;
    line-height: 32px;
  }
  .lg {
    font-size: 28.7px;
    line-height: 32px;
    padding-left: 4px;
  }
  .lg.prod { font-size: 29.3px; }
  .ink {
    border-right-color: #000;
    border-bottom-color: #000;
  }
  .grey { background: #bfbfbf; }
  .yellow { background: #ff0; }
  .pale { background: #ff9; }
  .bold { font-weight: bold; }
  .top-thick { border-top: 2px solid #000; }
  .bottom-thick { border-bottom-width: 2px; }
  .right-thick { border-right-width: 2px; }
  .lg.center { justify-content: center; padding-left: 0; }
  .lg.num { justify-content: flex-end; padding-left: 0; font-size: 28.4px; }
  .num-0 { padding-right: 4px; }
  .num-2 { padding-right: 14px; }
  .num-3 { padding-right: 14px; }
  .num-4 { padding-right: 13px; }
  .num-5 { padding-right: 13px; }
  .tri::before {
    content: '';
    position: absolute;
    left: 0;
    top: 0;
    border-top: 6px solid #0a7a1f;
    border-right: 6px solid transparent;
  }
  .note {
    font-size: 13.6px;
    font-weight: bold;
    padding: 0 0 2px 3px;
    line-height: 17px;
  }
  .formula {
    font-size: 13px;
    line-height: 17px;
    padding: 0 0 1px 3px;
    border-right: 0;
    z-index: 1;
  }

  .vscroll {
    flex: 1;
    display: flex;
    flex-direction: column;
    justify-content: space-between;
    align-items: flex-end;
    padding: 2px 0 1px;
  }
  .v-btn {
    width: 6px;
    height: 14px;
    box-sizing: border-box;
    border: 1px solid #8a8a8a;
    border-right: 0;
    background: #fff;
    display: flex;
    align-items: center;
    overflow: hidden;
  }

  .sheet-tabs {
    height: 28px;
    flex: none;
    box-sizing: border-box;
    background: #e6e6e6;
    border-top: 1px solid #a0a0a0;
    border-bottom: 1px solid #c6c6c6;
    display: flex;
    align-items: center;
  }
  .nav-arrows {
    width: 100px;
    display: flex;
    gap: 23px;
    padding-left: 26px;
    box-sizing: border-box;
  }
  .tab-sep {
    width: 1px;
    height: 20px;
    background: #a0a0a0;
    flex: none;
  }
  .sheet-tab {
    font-size: 13px;
    color: #555;
    height: 26px;
    line-height: 26px;
    margin-left: 12px;
    width: 74px;
    margin-top: -1px;
    white-space: nowrap;
  }
  .sheet-tab.current {
    margin-left: 0;
    width: 86px;
    height: 25px;
    line-height: 24px;
    box-sizing: border-box;
    background: #fff;
    border-left: 1px solid #a0a0a0;
    border-right: 1px solid #a0a0a0;
    border-bottom: 2px solid #217346;
    font-weight: 700;
    color: #217346;
    text-align: center;
    align-self: flex-start;
    margin-top: 0;
  }
  .add { margin-left: 32px; }
  .split-dots {
    display: flex;
    flex-direction: column;
    gap: 2px;
    margin-left: 830px;
  }
  .hscroll {
    margin-left: 15px;
    flex: 1;
    height: 18px;
    display: flex;
    padding-right: 9px;
  }
  .h-btn {
    width: 15px;
    flex: none;
    box-sizing: border-box;
    background: #fff;
    border: 1px solid #808080;
    display: flex;
    align-items: center;
    justify-content: center;
  }
  .h-thumb {
    width: 634px;
    box-sizing: border-box;
    flex: none;
    background: #fff;
    border: 1px solid #808080;
    margin-left: 1px;
  }
  .h-track {
    flex: 1;
    background: #d4d4d4;
  }

  .status {
    height: 22px;
    flex: none;
    background: #f3f2f1;
    display: flex;
    align-items: center;
    color: #605e5c;
  }
  .status > * { flex: none; }
  .st-text { font-size: 12px; white-space: nowrap; }
  .first { margin-left: 8px; width: 74px; }
  .st-macro { margin-right: 17px; }
  .st-access { margin-right: 3px; }
  .views {
    display: flex;
    gap: 26.5px;
    margin-left: auto;
    margin-right: 18.5px;
  }
  .zoom {
    display: flex;
    align-items: center;
    width: 166px;
    overflow: hidden;
    height: 22px;
  }
  .z-sign {
    width: 8px;
    height: 1px;
    background: #a19f9d;
    position: relative;
    flex: none;
  }
  .z-sign.plus::after {
    content: '';
    position: absolute;
    left: 4px;
    top: -4px;
    width: 1px;
    height: 9px;
    background: #a19f9d;
  }
  .z-track {
    width: 100px;
    height: 1px;
    background: #605e5c;
    margin: 0 5px;
    position: relative;
    flex: none;
  }
  .z-track i {
    position: absolute;
    left: 50px;
    top: -3px;
    width: 1px;
    height: 7px;
    background: #605e5c;
  }
  .z-pct {
    color: #a19f9d;
    margin-left: 14px;
    white-space: nowrap;
  }

  .taskbar {
    height: 39px;
    flex: none;
    background: #1c1c1c;
    display: flex;
    align-items: center;
    color: #fff;
    position: relative;
  }
  .win { margin-left: 16px; }
  .search {
    margin-left: 15px;
    width: 343px;
    height: 39px;
    box-sizing: border-box;
    background: #f2f2f2;
    border-top: 1px solid #c8c8c8;
    display: flex;
    align-items: center;
    gap: 12px;
    padding-left: 12px;
    font-size: 15px;
    color: #333;
    flex: none;
  }
  .apps {
    display: flex;
    height: 39px;
  }
  .app {
    width: 49px;
    height: 39px;
    box-sizing: border-box;
    display: flex;
    align-items: center;
    justify-content: center;
    position: relative;
    flex: none;
  }
  .app.mail svg { margin-left: 10px; }
  .app.on::after {
    content: '';
    position: absolute;
    left: 4px;
    right: 4px;
    bottom: 0;
    height: 2px;
    background: #76b9ed;
  }
  .app.current { background: #4d4d4d; }
  .app.current::after { left: 0; right: 0; }
  .tray {
    margin-left: auto;
    display: flex;
    align-items: center;
    height: 39px;
    font-size: 13px;
    white-space: nowrap;
  }
  .moon { margin-right: 11px; }
  .temp { margin-right: 9px; }
  .klar { margin-right: 15px; }
  .i-up { margin-right: 9px; }
  .i-cloud { margin-right: 10px; }
  .i-wifi { margin-right: 8px; }
  .i-vol { margin-right: 7px; }
  .clock {
    display: flex;
    flex-direction: column;
    align-items: center;
    gap: 2px;
    font-size: 12.5px;
    line-height: 16px;
    width: 60px;
  }
  .notif { margin: 0 5px 0 15px; }

  .shapes {
    position: absolute;
    left: 0;
    top: 0;
    pointer-events: none;
    z-index: 2;
  }
  .dialog {
    position: absolute;
    z-index: 3;
    left: 383px;
    top: 303px;
    width: 673px;
    height: 212px;
    box-sizing: border-box;
    background: #f0f0f0;
    border: 1px solid #6d6d6d;
    box-shadow: 0 4px 26px rgba(0, 0, 0, 0.32);
    display: flex;
    flex-direction: column;
    font-size: 11.5px;
    color: #111;
  }
  .dlg-title {
    height: 30px;
    flex: none;
    background: #fff;
    display: flex;
    align-items: center;
    justify-content: space-between;
    padding: 0 10px 0 8px;
    font-size: 12px;
  }
  .dlg-body {
    display: flex;
    padding: 14px 0 0 17px;
    flex: 1;
  }
  .warn { margin-top: 48px; }
  .dlg-text {
    margin-left: 15px;
    line-height: 13px;
  }
  .dlg-text p { margin: 0 0 13px; white-space: nowrap; }
  .dlg-actions {
    display: flex;
    gap: 17px;
    padding: 0 0 4px 228px;
  }
  .dlg-btn {
    width: 99px;
    height: 21px;
    box-sizing: border-box;
    padding: 0;
    background: #e1e1e1;
    border: 1px solid #adadad;
    font: inherit;
    color: #111;
    line-height: 17px;
  }
  .dlg-btn.primary {
    border: 2px solid #0078d7;
    padding: 1px;
  }
  .dlg-btn.primary span {
    display: block;
    height: 100%;
    box-sizing: border-box;
    border: 1px dotted #222;
    line-height: 13px;
  }
</style>
